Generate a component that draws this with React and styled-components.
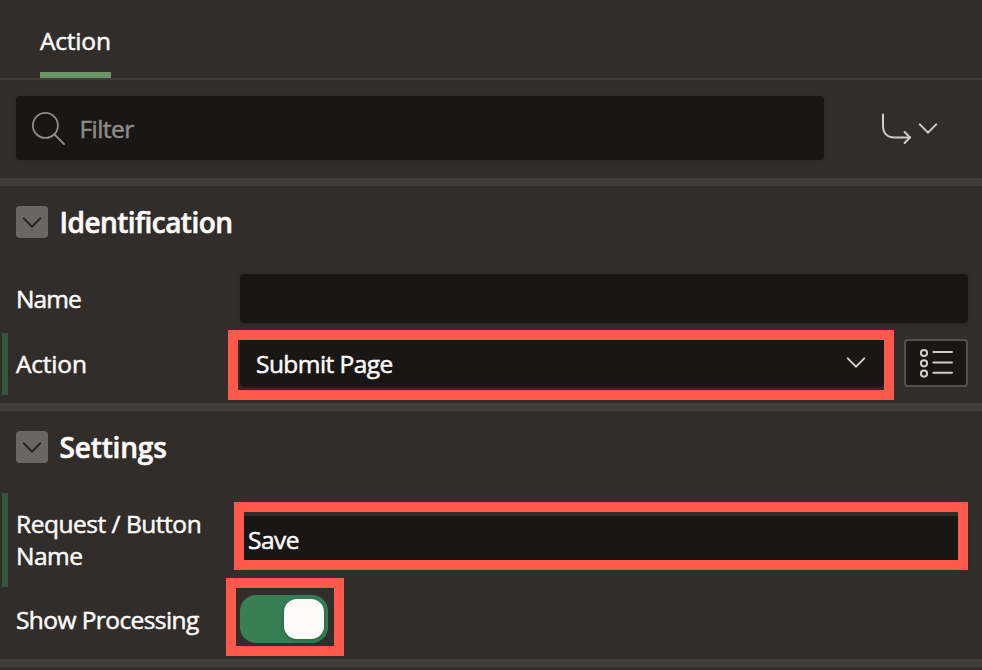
import React from "react";
import styled, { createGlobalStyle } from "styled-components";

const GlobalStyle = createGlobalStyle`
  *, *::before, *::after { box-sizing: border-box; }
  body { margin: 0; background: #312d2a; overflow: hidden; }
`;

const Panel = styled.main`
  width: 982px;
  height: 670px;
  overflow: hidden;
  display: flex;
  flex-direction: column;
  background: #312d2a;
  color: #fcfbfa;
  font-family: "Open Sans", "Noto Sans", sans-serif;
  font-size: 24.5px;
  line-height: 32px;
`;

const Text = styled.span`
  white-space: pre-line;
  letter-spacing: ${(p) => p.$track || 0}px;
  -webkit-text-stroke: 0.5px currentColor;
`;

const TabBar = styled.nav`
  flex: none;
  height: 80px;
  padding-left: 40px;
  display: flex;
  border-bottom: 2px solid #403c38;
`;

const Tab = styled.div`
  width: 71px;
  height: 78px;
  padding-top: 25px;
  white-space: nowrap;
  border-bottom: 6px solid #6b9464;
`;

const Toolbar = styled.div`
  flex: none;
  height: 98px;
  padding: 16px 44px 18px 16px;
  display: flex;
  justify-content: space-between;
`;

const FilterField = styled.label`
  width: 808px;
  height: 64px;
  padding: 2px 0 0 16px;
  display: flex;
  align-items: center;
  gap: 14.5px;
  border-radius: 4px;
  background: #191715;
  box-shadow: 0 1px 4px rgba(0, 0, 0, 0.15);
  color: #8f8c89;
`;

const GoToMenu = styled.div`
  padding-top: 2px;
  display: flex;
  align-items: center;
  gap: 6px;
`;

const Section = styled.section`
  flex: none;
  height: ${(p) => p.$height}px;
  padding-top: 20px;
  border-top: 8px solid #403c38;
`;

const SectionHeader = styled.header`
  height: 32px;
  margin-bottom: ${(p) => p.$gap}px;
  padding-left: 16px;
  display: flex;
  align-items: center;
  gap: 11.5px;
`;

const CollapseButton = styled.div`
  width: 32px;
  height: 32px;
  padding-top: 2px;
  display: flex;
  align-items: center;
  justify-content: center;
  border-radius: 4px;
  background: #6b665f;
`;

const Heading = styled.h2`
  margin: 0;
  font-size: 28px;
  font-weight: 600;
  line-height: 32px;
  letter-spacing: ${(p) => p.$track}px;
  -webkit-text-stroke: 0.6px currentColor;
`;

const Row = styled.div`
  position: relative;
  height: ${(p) => p.$height}px;
  margin-bottom: ${(p) => p.$gap || 0}px;
  padding: 0 14px 0 8px;
  margin-left: 2px;
  display: grid;
  grid-template-columns: 224px 1fr;
  align-items: center;
  border-left: 6px solid ${(p) => (p.$changed ? "#36573f" : "transparent")};
`;

const Controls = styled.div`
  display: flex;
  gap: 20px;
  margin-bottom: 2px;
`;

const Field = styled.div`
  flex: 1;
  height: ${(p) => p.$height || 48}px;
  padding: ${(p) => p.$padding || "0 18px 0 16px"};
  display: flex;
  align-items: center;
  justify-content: space-between;
  border-radius: 4px;
  background: #191715;
  box-shadow: 0 1px 4px rgba(0, 0, 0, 0.15);
`;

const SelectValue = styled.div`
  padding-top: 1px;
`;

const ListButton = styled.div`
  width: 64px;
  height: 48px;
  display: flex;
  align-items: center;
  justify-content: center;
  border: 2px solid #55504b;
  border-radius: 4px;
  background: #191715;
`;

const Toggle = styled.div`
  width: 88px;
  height: 48px;
  margin-bottom: 1px;
  padding: 4px;
  display: flex;
  justify-content: flex-end;
  border-radius: 16px;
  background: #387f56;
`;

const Knob = styled.div`
  width: 40px;
  height: 40px;
  border-radius: 13px;
  background: #fcfbfa;
  box-shadow: 0 1px 5px rgba(0, 0, 0, 0.25);
`;

const Highlight = styled.div`
  position: absolute;
  left: ${(p) => p.$left}px;
  top: ${(p) => p.$top}px;
  width: ${(p) => p.$width}px;
  height: ${(p) => p.$height}px;
  border: 10px solid #ff594c;
`;

const Footer = styled.div`
  flex: none;
  height: 11px;
  border-top: 8px solid #403c38;
`;

const Icon = styled.svg`
  display: block;
  flex: none;
  fill: none;
  stroke: ${(p) => p.$color || "#d0cdca"};
  stroke-width: ${(p) => p.$stroke || 2};
  stroke-linecap: round;
`;

const Chevron = ({ color }) => (
  <Icon width="20" height="12" viewBox="0 0 20 12" $color={color}>
    <path d="M1.8 1.4 10 9.6 18.2 1.4" />
  </Icon>
);

const SearchIcon = () => (
  <Icon width="33" height="34" viewBox="0 0 33 34" $color="#8f8c89" $stroke={1.8}>
    <circle cx="13.4" cy="13.4" r="12.5" />
    <path d="M22.5 22.5 32 32" />
  </Icon>
);

const ArrowIcon = () => (
  <Icon width="30" height="32" viewBox="0 0 30 32">
    <path d="M1 1.5V12.8C1 20 5 24.5 12.5 24.5H28" />
    <path d="M22.6 19 28 24.5 22.6 30" />
  </Icon>
);

const ListIcon = () => (
  <Icon width="34" height="30" viewBox="0 0 34 30">
    {[5, 15.3, 25.6].map((y) => (
      <React.Fragment key={y}>
        <circle cx="5" cy={y} r="3.1" />
        <path d={`M14.3 ${y - 0.9}H33`} />
      </React.Fragment>
    ))}
  </Icon>
);

const SectionTitle = ({ title, gap, track }) => (
  <SectionHeader $gap={gap}>
    <CollapseButton>
      <Chevron color="#24211f" />
    </CollapseButton>
    <Heading $track={track}>{title}</Heading>
  </SectionHeader>
);

export default function App() {
  return (
    <>
      <GlobalStyle />
      <Panel>
        <TabBar>
          <Tab>
            <Text $track={-0.2}>Action</Text>
          </Tab>
        </TabBar>
        <Toolbar>
          <FilterField>
            <SearchIcon />
            <Text $track={-0.55}>Filter</Text>
          </FilterField>
          <GoToMenu>
            <ArrowIcon />
            <Chevron />
          </GoToMenu>
        </Toolbar>

        <Section $height={225}>
          <SectionTitle title="Identification" gap={30} track={-0.55} />
          <Row $height={61} $gap={4}>
            <Text $track={-0.9}>Name</Text>
            <Field $height={49} />
          </Row>
          <Row $height={62} $changed>
            <Text $track={-0.2}>Action</Text>
            <Controls>
              <Field>
                <SelectValue>
                  <Text $track={-0.55}>Submit Page</Text>
                </SelectValue>
                <Chevron />
              </Field>
              <ListButton>
                <ListIcon />
              </ListButton>
            </Controls>
            <Highlight $left={220} $top={-3} $width={666} $height={70} />
          </Row>
        </Section>

        <Section $height={256}>
          <SectionTitle title="Settings" gap={30} track={-0.15} />
          <Row $height={94} $gap={2} $changed>
            <Text $track={-0.48}>{"Request / Button\nName"}</Text>
            <Field $padding="0 8px">
              <Text $track={-0.5}>Save</Text>
            </Field>
            <Highlight $left={226} $top={9} $width={734} $height={68} />
          </Row>
          <Row $height={61}>
            <Text $track={-0.58}>Show Processing</Text>
            <Toggle>
              <Knob />
            </Toggle>
            <Highlight $left={218} $top={-11} $width={118} $height={78} />
          </Row>
        </Section>
        <Footer />
      </Panel>
    </>
  );
}
